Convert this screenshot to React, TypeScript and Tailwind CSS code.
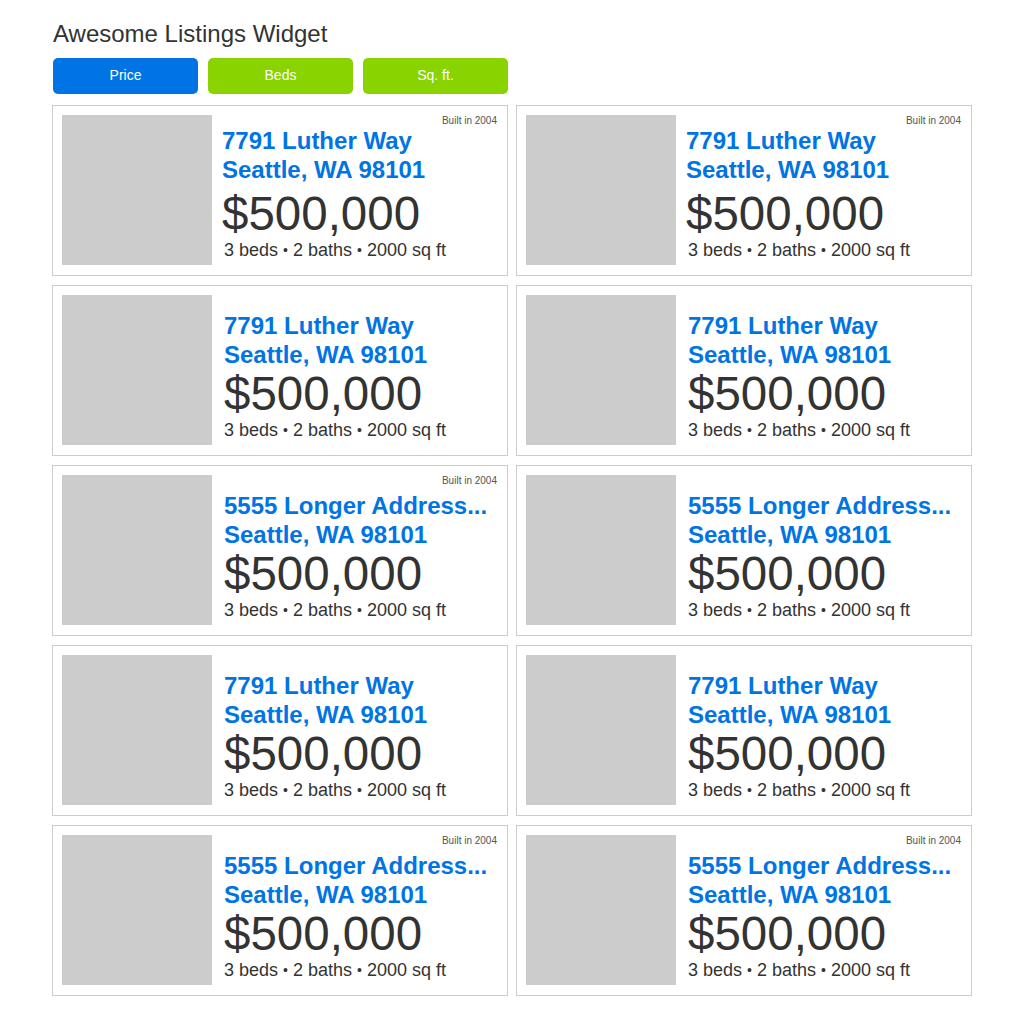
import React from 'react';

interface Listing {
  street: string;
  city: string;
  price: string;
  beds: number;
  baths: number;
  sqft: number;
  built?: number;
}

const short: Listing = { street: '7791 Luther Way', city: 'Seattle, WA 98101', price: '$500,000', beds: 3, baths: 2, sqft: 2000 };
const long: Listing = { street: '5555 Longer Address...', city: 'Seattle, WA 98101', price: '$500,000', beds: 3, baths: 2, sqft: 2000 };

const listings: Listing[] = [
  { ...short, built: 2004 },
  { ...short, built: 2004 },
  short,
  short,
  { ...long, built: 2004 },
  long,
  short,
  short,
  { ...long, built: 2004 },
  { ...long, built: 2004 },
];

function Dot() {
  return <span className="align-[1px] text-[14px]">•</span>;
}

function ListingCard({ listing, first }: { listing: Listing; first: boolean }) {
  return (
    <div className="relative flex h-[171px] w-[456px] border border-[#cccccc] bg-white pl-[9px] pt-[9px]">
      <div className="h-[150px] w-[150px] shrink-0 bg-[#cccccc]" />
      {listing.built && (
        <div className="absolute right-[10px] top-[9px] text-[10px] leading-[12px] text-[#555555]">
          Built in {listing.built}
        </div>
      )}
      <div className="ml-[12px] flex flex-col">
        <div
          className={
            first
              ? '-ml-[2px] mt-[11px] text-[24px] font-bold leading-[29px] text-[#0074e4]'
              : 'mt-[16px] text-[24px] font-bold leading-[29px] text-[#0074e4]'
          }
        >
          <div className="whitespace-nowrap">{listing.street}</div>
          <div className="whitespace-nowrap">{listing.city}</div>
        </div>
        <div
          className={
            first
              ? '-ml-[2px] mt-[6px] whitespace-nowrap text-[47.5px] leading-[47px] text-[#333333]'
              : 'mt-[1px] whitespace-nowrap text-[47.5px] leading-[47px] text-[#333333]'
          }
        >
          {listing.price}
        </div>
        <div className="mt-[3px] whitespace-nowrap text-[18px] leading-[21px] text-[#333333]">
          {listing.beds} beds <Dot /> {listing.baths} baths <Dot /> {listing.sqft} sq ft
        </div>
      </div>
    </div>
  );
}

export default function App() {
  const sorts = [
    { label: 'Price', active: true },
    { label: 'Beds', active: false },
    { label: 'Sq. ft.', active: false },
  ];

  return (
    <div className="min-h-[1024px] bg-white pl-[52px] pt-[19px] font-['Liberation_Sans',Arial,sans-serif]">
      <h1 className="ml-[1px] text-[24px] leading-[29px] text-[#333333]">Awesome Listings Widget</h1>
      <div className="ml-[1px] mt-[10px] flex gap-[10px]">
        {sorts.map((s) => (
          <button
            key={s.label}
            className={
              s.active
                ? 'h-[36px] w-[145px] rounded-[5px] bg-[#0074e4] pb-[2px] text-[14px] leading-[16px] text-white'
                : 'h-[36px] w-[145px] rounded-[5px] bg-[#88d300] pb-[2px] text-[14px] leading-[16px] text-white'
            }
          >
            {s.label}
          </button>
        ))}
      </div>
      <div className="mt-[11px] grid w-max grid-cols-[456px_456px] gap-x-[8px] gap-y-[9px]">
        {listings.map((l, i) => (
          <ListingCard key={i} listing={l} first={i < 2} />
        ))}
      </div>
    </div>
  );
}
